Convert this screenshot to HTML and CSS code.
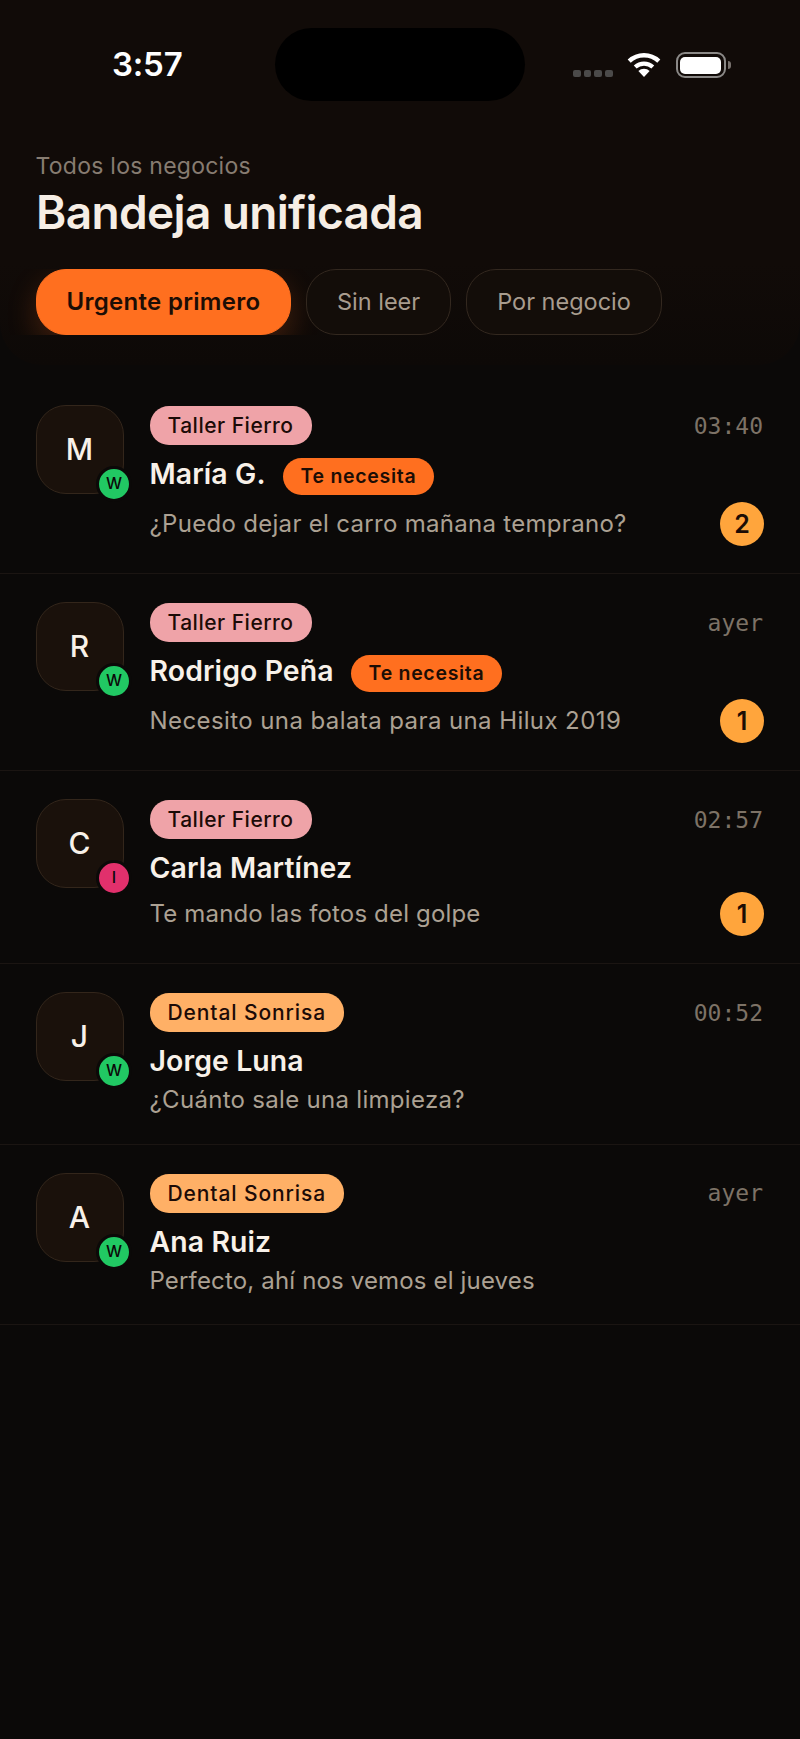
FILE: index.html
```html
<!DOCTYPE html>
<html lang="es">
<head>
<meta charset="utf-8">
<title>Bandeja unificada</title>
<link rel="stylesheet" href="styles.css">
</head>
<body>
<div class="screen">
  <header class="top">
    <div class="status">
      <span class="clock">3:57</span>
      <span class="island"></span>
      <div class="sys">
        <span class="dots"><i></i><i></i><i></i><i></i></span>
        <svg class="wifi" viewBox="0 0 34 25" width="34" height="25"><path d="M2.2 9.2a21.5 21.5 0 0 1 29.6 0" fill="none" stroke="#fff" stroke-width="4.4"/><path d="M8.2 15a13 13 0 0 1 17.6 0" fill="none" stroke="#fff" stroke-width="4.2"/><path d="M17 25l-5.6-6a8 8 0 0 1 11.2 0z" fill="#fff"/></svg>
        <span class="batt"><span class="batt-fill"></span></span>
        <span class="batt-cap"></span>
      </div>
    </div>
    <p class="eyebrow">Todos los negocios</p>
    <h1 class="title">Bandeja unificada</h1>
    <div class="chips">
      <span class="chip chip-on">Urgente primero</span>
      <span class="chip">Sin leer</span>
      <span class="chip">Por negocio</span>
    </div>
  </header>
  <main class="list">
    <article class="row row-tall">
      <div class="avatar">M<span class="src src-w">W</span></div>
      <div class="body">
        <div class="line"><span class="tag tag-pink">Taller Fierro</span><time class="time">03:40</time></div>
        <div class="who"><span class="name">María G.</span><span class="need">Te necesita</span></div>
        <div class="line"><span class="msg">¿Puedo dejar el carro mañana temprano?</span><span class="count">2</span></div>
      </div>
    </article>
    <article class="row row-tall">
      <div class="avatar">R<span class="src src-w">W</span></div>
      <div class="body">
        <div class="line"><span class="tag tag-pink">Taller Fierro</span><time class="time">ayer</time></div>
        <div class="who"><span class="name">Rodrigo Peña</span><span class="need">Te necesita</span></div>
        <div class="line"><span class="msg msg-wide">Necesito una balata para una Hilux 2019</span><span class="count">1</span></div>
      </div>
    </article>
    <article class="row row-mid">
      <div class="avatar">C<span class="src src-i">I</span></div>
      <div class="body">
        <div class="line"><span class="tag tag-pink">Taller Fierro</span><time class="time">02:57</time></div>
        <div class="who"><span class="name">Carla Martínez</span></div>
        <div class="line"><span class="msg msg-narrow">Te mando las fotos del golpe</span><span class="count">1</span></div>
      </div>
    </article>
    <article class="row">
      <div class="avatar">J<span class="src src-w">W</span></div>
      <div class="body">
        <div class="line"><span class="tag tag-peach">Dental Sonrisa</span><time class="time">00:52</time></div>
        <div class="who"><span class="name">Jorge Luna</span></div>
        <div class="line"><span class="msg">¿Cuánto sale una limpieza?</span></div>
      </div>
    </article>
    <article class="row">
      <div class="avatar">A<span class="src src-w">W</span></div>
      <div class="body">
        <div class="line"><span class="tag tag-peach">Dental Sonrisa</span><time class="time">ayer</time></div>
        <div class="who"><span class="name">Ana Ruiz</span></div>
        <div class="line"><span class="msg msg-narrow">Perfecto, ahí nos vemos el jueves</span></div>
      </div>
    </article>
  </main>
</div>
</body>
</html>
```
FILE: styles.css
```css
* { box-sizing: border-box; margin: 0; padding: 0; }
html, body { background: #0b0908; }
body { font-family: Inter, "Noto Sans", sans-serif; color: #f7f1ea; }
.screen { width: 800px; height: 1739px; overflow: hidden; background: #0b0908; }

.top {
  height: 365px;
  background: linear-gradient(#110b08 0, #110b08 72%, #0d0907 100%);
  border-radius: 0 0 42px 42px;
}
.status { height: 151px; padding: 28px 68px 0 112px; display: flex; align-items: flex-start; }
.clock { font-size: 33px; font-weight: 600; line-height: 73px; color: #fff; width: 163px; letter-spacing: -0.2px; }
.island { width: 250px; height: 73px; border-radius: 37px; background: #000; }
.sys { margin-left: 48px; display: flex; align-items: flex-start; height: 73px; padding-top: 24px; }
.dots { display: flex; gap: 3.2px; margin-top: 18px; margin-right: 14px; }
.dots i { width: 7.5px; height: 7px; border-radius: 2px; background: #4b4a49; }
.wifi { display: block; margin-right: 15px; }
.batt { width: 50px; height: 26px; border: 2.5px solid #8b8987; border-radius: 9px; padding: 2.5px; display: block; }
.batt-fill { display: block; width: 100%; height: 100%; background: #fff; border-radius: 5px; }
.batt-cap { width: 3px; height: 8px; margin-top: 9px; margin-left: 2px; background: #77716d; border-radius: 0 3px 3px 0; }

.eyebrow { padding-left: 35.5px; font-size: 23px; line-height: 30px; color: #877c71; letter-spacing: 0.25px; }
.title { padding-left: 36px; font-size: 46px; line-height: 56px; font-weight: 600; color: #f6eee5; margin-top: 3px; letter-spacing: -0.65px; }
.chips { margin-top: 29px; padding-left: 36px; height: 66px; display: flex; gap: 15px; overflow: hidden; }
.chip {
  height: 66px;
  padding: 0 30px;
  border: 1.5px solid #33281f;
  background: #130d09;
  border-radius: 30px;
  font-size: 23.5px;
  line-height: 63px;
  color: #a89c8e;
}
.chip-on {
  padding: 0 29.5px;
  background: #ff6f1f;
  border-color: #ff6f1f;
  color: #1c0d05;
  font-size: 24px;
  font-weight: 600;
  letter-spacing: 0.3px;
  box-shadow: 0 12px 30px rgba(255, 111, 31, 0.22);
}

.list { padding-top: 12px; }
.row {
  display: flex;
  gap: 25.5px;
  padding: 28px 36px 0;
  border-bottom: 1.5px solid #1b1512;
  height: 180.5px;
}
.row-tall { height: 197px; }
.row-mid { height: 193px; }
.avatar {
  position: relative;
  flex: none;
  width: 88px;
  height: 89px;
  border: 1.5px solid #33261b;
  border-radius: 30px;
  background: #1a110b;
  font-size: 30px;
  font-weight: 500;
  line-height: 86px;
  text-align: center;
  text-indent: -1px;
  color: #f8f1e9;
}
.src {
  position: absolute;
  right: -9px;
  bottom: -9px;
  width: 36px;
  height: 36px;
  border: 3.5px solid #0b0908;
  border-radius: 50%;
  font-size: 16px;
  font-weight: 500;
  line-height: 29px;
  text-align: center;
  text-indent: 0;
  color: #0b0908;
}
.src-w { background: #21c863; }
.src-i { background: #e1306c; }
.body { flex: 1; min-width: 0; }
.line { display: flex; justify-content: space-between; align-items: center; }
.line:first-child { padding-top: 1px; }
.line:last-child { margin-top: 1px; }
.tag { height: 39px; padding: 0 18px; border-radius: 19px; font-size: 21px; font-weight: 500; line-height: 39px; color: #1c0b07; }
.tag-pink { background: #efa3a8; letter-spacing: 0.5px; }
.tag-peach { background: #ffb066; letter-spacing: 0.9px; }
.time { font-family: "DejaVu Sans Mono", monospace; font-size: 23px; color: #7d7266; padding-right: 1px; }
.who { display: flex; align-items: center; margin-top: 10px; height: 37px; }
.name { font-size: 28.4px; font-weight: 600; color: #f8f1e9; letter-spacing: 0.1px; }
.need { margin: 6.5px 0 0 17px; height: 37px; padding: 0 18px; border-radius: 19px; background: #ff6f1f; font-size: 19.5px; font-weight: 600; line-height: 37px; color: #1c0d05; letter-spacing: 0.7px; }
.msg { font-size: 24px; line-height: 40px; color: #aca193; letter-spacing: 0.3px; }
.msg-wide { letter-spacing: 0.41px; }
.msg-narrow { letter-spacing: 0.16px; }
.count { flex: none; width: 44px; height: 44px; border-radius: 50%; background: #ffa53c; font-size: 25px; font-weight: 600; line-height: 44px; text-align: center; color: #1c0d05; }
.row-tall .line:last-child { margin-top: 9.5px; }
.row-mid .line:last-child { margin-top: 6px; }
```
